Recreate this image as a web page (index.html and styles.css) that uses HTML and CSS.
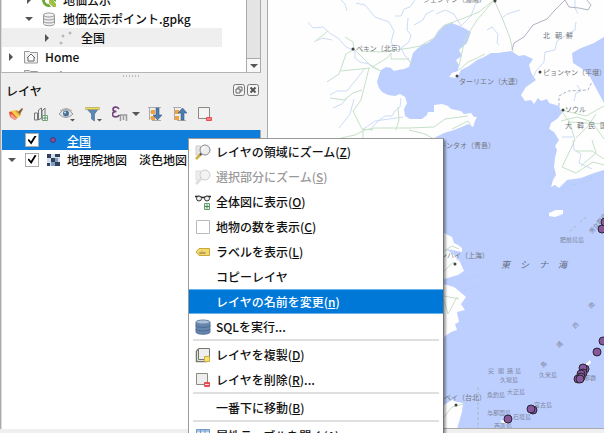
FILE: index.html
```html
<!DOCTYPE html>
<html lang="ja">
<head>
<meta charset="utf-8">
<title>レイヤ</title>
<link rel="stylesheet" href="styles.css">
</head>
<body>
<div class="workspace">
  <aside class="dock">
    <section class="browser">
      <ul class="tree">
        <li class="row depth-2"><span class="twist closed"></span>
          <svg class="icon" viewBox="0 0 16 16"><path d="M8 1a7 7 0 1 0 2 13.700L8 12A4 4 0 1 1 12 8l2.700 2A7 7 0 0 0 8 1z" fill="#70a83b"/><path d="M8 8h4l3 4v3h-3L8 11z" fill="#8cc04b"/><path d="M8 8l7 7" stroke="#e9b22c"/></svg>
          地価公示</li>
        <li class="row depth-2"><span class="twist open"></span>
          <svg class="icon" viewBox="0 0 16 16"><path d="M2.500 4v8.500c0 3 11 3 11 0V4" fill="#eee" stroke="#999"/><ellipse cx="8" cy="4" rx="5.500" ry="2" fill="#f4f4f4" stroke="#999"/><path d="M2.500 7c0 2.600 11 2.600 11 0M2.500 10c0 2.600 11 2.600 11 0" fill="none" stroke="#999"/></svg>
          地価公示ポイント.gpkg</li>
        <li class="row depth-3 hover"><span class="twist closed"></span>
          <svg class="icon" viewBox="0 0 16 16"><g fill="#ddd" stroke="#aaa"><circle cx="4" cy="6" r="1"/><circle cx="11" cy="3" r="1"/><circle cx="2" cy="13" r="1"/></g></svg>
          全国</li>
        <li class="row depth-1"><span class="twist closed"></span>
          <svg class="icon" viewBox="0 0 16 16"><path d="M1.500 14V2.500h5l1 1h7V14z" fill="#f1f1f1" stroke="#999"/><path d="M4 9l4-4 4 4M5 8.500V12h6V8.500" fill="#fff" stroke="#666"/></svg>
          Home</li>
        <li class="row depth-1"><span class="twist closed"></span>
          <svg class="icon" viewBox="0 0 16 16"><path d="M1.500 14V2.500h5l1 1h7V14z" fill="#e4e4e4" stroke="#999"/></svg>
          G:/</li>
      </ul>
      <div class="scroll"><span class="scroll-down"><i class="caret"></i></span></div>
    </section>
    <div class="grip"></div>
    <header class="title">
      <h2>レイヤ</h2>
      <button class="mini" aria-label="切り離す"><svg viewBox="0 0 12 12"><rect x=".5" y=".5" width="11" height="11" rx="2" fill="#f4f4f4" stroke="#777"/><path d="M5 5V3h4v4H7M3 5h4v4H3z" fill="none" stroke="#666"/></svg></button>
      <button class="mini" aria-label="閉じる"><svg viewBox="0 0 12 12"><rect x=".5" y=".5" width="11" height="11" rx="2" fill="#f4f4f4" stroke="#777"/><path d="M3.500 3.500l5 5m0-5l-5 5" stroke="#555" stroke-width="2"/></svg></button>
    </header>
    <div class="toolbar">
      <button class="tool" aria-label="スタイル"><svg viewBox="0 0 16 16"><path d="M1 6l4-1 5 6-3 3-5-3z" fill="#e8533c"/><path d="M3 5l4-1 5 6-3 2z" fill="#f6cf45"/><path d="M2 10l4 4 3-1-5-5z" fill="#f3a18f"/><path d="M7 5l2-1 4 4-1 2z" fill="#d39a45"/><path d="M10 6l4-4 1 1-3 5z" fill="#8b5a2b"/></svg></button>
      <button class="tool" aria-label="グループ追加"><svg viewBox="0 0 16 16"><path d="M1.500 7h3v7h-3zM5.500 4l3-2v10l-3 2zM9 5l3-3v10l-3 2z" fill="#eee" stroke="#777"/><path d="M9.500 9.500h5v5h-5z" fill="#fff" stroke="#6da57b"/><path d="M12 10v4m-2-2h4" stroke="#548d65"/></svg></button>
      <button class="tool wide" aria-label="地図テーマ"><svg viewBox="0 0 18 16"><path d="M1 8q7-9 14 0-7 7-14 0z" fill="#e5e5e5" stroke="#999"/><circle cx="8" cy="7.500" r="3" fill="#477399"/><circle cx="7" cy="6.500" r="1" fill="#cde"/><path d="M2 5q6-5 12 0" fill="none" stroke="#aaa"/><path d="M12 13h5l-2.500 2.500z" fill="#555"/></svg></button>
      <button class="tool wide" aria-label="フィルタ"><svg viewBox="0 0 18 16"><path d="M1 2h13l-4.500 6v7l-3-2V8z" fill="#5b87b4" stroke="#42698f" stroke-width=".6"/><path d="M.5 1.500h14v2H.5z" fill="#f2dc5b" stroke="#a99b46" stroke-width=".5"/><path d="M12 13h5l-2.500 2.500z" fill="#555"/></svg></button>
      <button class="tool" aria-label="式フィルタ"><svg viewBox="0 0 16 16"><path d="M7 3C5 0 1 1 1 3.500 1 5 3 5.500 4.500 5.500 2 5.500 0 7 .5 9c.5 2.500 5 2.500 7 0" fill="none" stroke="#73457e" stroke-width="1.700"/><path d="M8.500 15V9h6v6M11.500 14V10" fill="none" stroke="#999" stroke-width="1.500"/></svg></button>
      <button class="tool thin" aria-label="式フィルタのメニュー"><i class="caret"></i></button>
      <button class="tool" aria-label="全て展開"><svg viewBox="0 0 16 16"><path d="M1 1.500h13M2.500 2v12M2 6h3m-3 6h3M5 14.500h9" fill="none" stroke="#aaa"/><path d="M4 4h4v4H4zM4 10h4v4H4z" fill="#f0a33a"/><path d="M9 2h3v7h3l-4.500 5L6 9h3z" fill="#4e7cab" stroke="#365f8b" stroke-width=".6"/></svg></button>
      <button class="tool" aria-label="全て折りたたむ"><svg viewBox="0 0 16 16"><path d="M1 1.500h8M2.500 2v12M2 6h3m-3 6h3M5 14.500h9" fill="none" stroke="#aaa"/><path d="M3 4h4v4H3zM3 10h4v4H3z" fill="#f0a33a"/><path d="M9 14h3V7h3l-4.500-5L6 7h3z" fill="#4e7cab" stroke="#365f8b" stroke-width=".6"/></svg></button>
      <button class="tool" aria-label="レイヤを削除"><svg viewBox="0 0 16 16"><path d="M1.500 1.500h11v11h-11z" fill="#f4f4f4" stroke="#8a8a80"/><rect x="9" y="11" width="6" height="4" rx="1" fill="#e94b50"/><path d="M10 13h4" stroke="#fbb"/></svg></button>
    </div>
    <ul class="layers">
      <li class="layer selected"><span class="twist"></span>
        <input type="checkbox" id="layer-points" checked>
        <svg class="symbol" viewBox="0 0 16 16"><circle cx="7" cy="8" r="2.500" fill="#825096" stroke="#4b3775"/></svg>
        <label for="layer-points">全国</label></li>
      <li class="layer"><span class="twist open"></span>
        <input type="checkbox" id="layer-base" checked>
        <svg class="symbol" viewBox="0 0 16 16"><path d="M1 2h13v12H1z" fill="#d4dfeb"/><path d="M1 2h4v4H1zM9 2h5v3H9zM5 6h4v4H5zM9 10h5v4H9zM1 11h3v3H1z" fill="#2e4160"/><path d="M5 10h4v4H5zM9 6h3v4H9z" fill="#829ebb"/></svg>
        <label for="layer-base">地理院地図　淡色地図</label></li>
    </ul>
  </aside>
  <main class="canvas">
    <svg class="map" viewBox="268 0 336 429" preserveAspectRatio="xMinYMin slice">
      <path class="sea" d="M434 38L428 43 422 45 417 49 413 53 411 60 409 67 404 69 398 70 394 71 391 68 386 67 381 70 379 75 377 82 379 88 382 92 388 95 395 96 400 94 405 97 407 103 404 109 405 116 410 119 422 119 427 115 428 112 434 112 434 105 442 104 448 106 451 109 461 111 464 114 471 113 474 117 477 117 475 121 473 127 468 124 464 126 454 130 444 133 430 140 420 180 438 230 444 233 452 237 454 243 458 245 462 248 462 252 447 249 451 253 457 257 460 262 464 271 458 275 451 277 444 279 440 283 447 285 454 287 459 291 466 297 461 304 465 310 457 312 459 322 455 324 457 330 451 332 444 337 430 370 430 429 604 429 604 170 594 173 581 178 574 179 567 180 559 188 555 185 551 187 553 180 556 175 554 167 555 158 557 150 555 146 559 140 554 132 549 129 551 123 557 119 562 113 559 106 549 103 547 99 541 101 538 98 534 104 531 100 525 101 521 95 526 87 536 80 533 76 531 72 529 65 533 59 524 55 519 56 511 51 504 52 498 53 491 53 484 57 477 60 469 66 461 70 457 78 449 77 452 73 458 71 459 65 456 60 462 56 459 50 467 43 471 32 462 27 452 23 444 25 438 31z"/>
      <path class="sea" d="M604 37l-10 6-5 2-8 3-9 5 1 10 8 5 8 7 8 15 7 13z"/>
      <path class="land" d="M430 410l14-5 8-5 5 2 6 1-1 9-3 10-2 7H430zM549 213l7-3 7 0 0 4-8 3-6-1zM586 367l5-4-1-3-4 4zM500 420l5 1 2 3-5-1z"/>
      <g class="specks"><path d="M554 172l-4 5 1 7-5-2M561 190l9-5 12-2 10-6M572 184l5 2M551 108l7 5-7 2M547 127l6 7M468 280l8-5 3 4 4-1M464 290l12-3M468 303l-3 8M529 182l3 2M488 62l5-2M497 58l2 3M477 131l-4 3"/></g>
      <g class="river">
        <path d="M308 22l5 6 10-1 8 7 7 4 8 9 9 4 0 7 5 4 9 2 10 6M317 41l5-3 10 2M341 0l4 4 2 7M356 3l9 2 10 12 14 5 5 9-3 11 4 6M395 16h6l3-7 6-2 5-7M408 18l-1 12 4 5-2 7-8 6 4 8 4 3M434 10l-8 4-3 6-9 5M330 95l7-4h10l12-15 6-8M333 108l9-4 5-6M339 128l11-14 4-15M370 130l8-9 7-5h7l3-5 5-4 1-9M362 130l13-9 28-4M436 14l9-4 9 4 7 12 10-10 4-11 9-8M487 30l5-3 6 7-1 9 2 2M544 62l1-10 10-2 2-9 8-5 10-6 1-8M532 80l4-9 8-9M574 101l2-8 5-2-4-6M575 0v8l3 6M573 140l1 10 7 4-2 9 13 6M562 137l11 0M446 250l7 2 5 9M502 18l5-4 13-4"/>
      </g>
      <g class="road">
        <path d="M314 42l14-11M345 37l8 5 1 7 18 18 9 4M353 50l-7 4-7 20-12 8M341 71l29-3M361 51l19 1 30-4 10-2 14-8M372 67l15-9 4-5v6h17l3 5M369 68l-5 20-3 12-8 11 9 18 11 1M330 98l14 2 9-7 9-3M341 138l14-3 10-5 9-2h35l25-1M409 130l16 4 9 5M363 130v9M398 107l1 13-3 10"/>
        <path d="M434 38l11-13 14-5 20-8 15-12M494 0l-17 20-12 19-6 27M494 0l9 20 7 18 3 14M459 70l9-8 9-4 8-4M434 127l11-8 23-3M452 129l16-8 3 5M561 110l9 13 5 17M562 110l24 6 18-10M561 121l16-4 15 5 12 17M576 138l12-12 8-12M575 140l-13 27 14 6 17-11 11 3M581 166l15-13-4-13M576 151l16 0 12 8M569 122l35 2M444 251l8-5 7 3M440 276l8-9 6-5M444 300l4 14 9-17M444 417l8-10 11-3M444 296l15 3"/>
      </g>
      <g class="border"><path d="M512 50l2-7 10-6 9-12 14-6 8-9 10-10 4 7 10 1 9 2 3-5-4-5"/><path stroke-dasharray="3 2" d="M559 106v-10l9-5 20-1 4-8M586 217l-6 5m-4 4l-7 6M478 387v42"/></g>
      <g class="city"><circle cx="353" cy="49" r="1.500"/><circle cx="457" cy="76" r="1.500"/><circle cx="540" cy="72" r="1.500"/><circle cx="563" cy="110" r="1.500"/><circle cx="495" cy="1" r="1.500"/><circle cx="455" cy="264" r="1.500"/><circle cx="456" cy="405" r="1.500"/></g>
      <g class="names">
        <text x="356" y="51">ペキン（北京）</text>
        <text x="423" y="2">シェンヤン（瀋陽）</text>
        <text x="459" y="84">ターリエン（大連）</text>
        <text x="543" y="75">ピョンヤン（平壌）</text>
        <text x="565" y="112">ソウル</text>
        <text x="495" y="148" text-anchor="end">チンタオ（青島）</text>
        <text x="489" y="258" text-anchor="end">シャンハイ（上海）</text>
        <text x="486" y="400" text-anchor="end">タイペイ（台北）</text>
        <text x="543 555 566" y="38">北朝鮮</text>
        <text x="565 577 588 600" y="128">大韓民国</text>
        <text class="ocean" x="501 520 539 558" y="268">東シナ海</text>
      </g>
      <g class="islands">
        <text x="560" y="242">肥前鳥島</text>
        <text x="488 498 507 515" y="373">尖閣諸島</text>
        <text x="500" y="382">久場島</text><text x="539" y="377">久米島</text>
        <text x="507" y="394">大正島</text><text x="487" y="397">魚釣島</text>
        <text x="534" y="407">宮古島</text><text x="487" y="415">与那国島</text>
        <text x="513" y="419">石垣島</text><text x="494" y="428">西表島</text>
        <text x="584" y="380">那覇</text>
        <text transform="translate(592 234) rotate(-50)">男女群島</text>
        <text transform="translate(591 309) rotate(-45)">南</text>
        <text transform="translate(575 329) rotate(-45)">西</text>
        <text transform="translate(559 348) rotate(-45)">諸</text>
        <text transform="translate(543 368) rotate(-45)">島</text>
      </g>
      <g class="points"><circle cx="605" cy="222" r="4"/><circle cx="602" cy="229" r="4"/><circle cx="603" cy="341" r="4"/><circle cx="597" cy="352" r="4"/><circle cx="585" cy="369" r="4"/><circle cx="583" cy="368" r="4"/><circle cx="583" cy="373" r="4"/><circle cx="581" cy="374" r="4"/><circle cx="581" cy="377" r="4"/><circle cx="578" cy="379" r="4"/><circle cx="580" cy="379" r="4"/><circle cx="533" cy="410" r="4"/><circle cx="531" cy="409" r="4"/><circle cx="508" cy="419" r="4"/></g>
    </svg>
  </main>
</div>
<footer class="status"></footer>

<div class="menu" role="menu">
  <button class="item" role="menuitem"><svg class="glyph" viewBox="0 0 16 16"><path d="M1 2h5v9H1z" fill="#e6e6e2" stroke="#ccc"/><path d="M6 10l-5 5" stroke="#d1ad43" stroke-width="2.500"/><path d="M7 9l-2 2" stroke="#555" stroke-width="2"/><circle cx="10" cy="6" r="5" fill="#eee" stroke="#8a8a8a"/><path d="M7 6q0-3 3-3" fill="none" stroke="#fff"/></svg><span>レイヤの領域にズーム(<u>Z</u>)</span></button>
  <button class="item" role="menuitem" disabled><svg class="glyph" viewBox="0 0 16 16"><path d="M1 2h5v9H1z" fill="#eee" stroke="#ddd"/><path d="M6 10l-5 5" stroke="#ddd" stroke-width="2.500"/><circle cx="10" cy="6" r="5" fill="#f3f3f3" stroke="#ccc"/></svg><span>選択部分にズーム(<u>S</u>)</span></button>
  <button class="item" role="menuitem"><svg class="glyph" viewBox="0 0 16 16"><path d="M0 2.500h4l3 1h2l3-1h4" fill="none" stroke="#222" stroke-width="1.500"/><circle cx="4" cy="4.500" r="2.500" fill="#eee" stroke="#333"/><circle cx="12" cy="4.500" r="2.500" fill="#eee" stroke="#333"/><path d="M9.500 9.500h5v6h-5z" fill="#e7f1e8" stroke="#629b69"/><path d="M12 10.500v4m-2-2h4" stroke="#4d8955"/></svg><span>全体図に表示(<u>O</u>)</span></button>
  <button class="item" role="menuitem"><svg class="glyph" viewBox="0 0 16 16"><path d="M1.500 1.500h13v13h-13z" fill="#fff" stroke="#bbb"/></svg><span>地物の数を表示(<u>C</u>)</span></button>
  <button class="item" role="menuitem"><svg class="glyph" viewBox="0 0 16 16"><path d="M1 8l3-3.500h10.500v7H4z" fill="#f3d96b" stroke="#c8a93d"/><text class="abc" x="4" y="10">abc</text></svg><span>ラベルを表示(<u>L</u>)</span></button>
  <button class="item" role="menuitem"><span class="glyph"></span><span>コピーレイヤ</span></button>
  <button class="item active" role="menuitem"><span class="glyph"></span><span>レイヤの名前を変更(<u>n</u>)</span></button>
  <button class="item" role="menuitem"><svg class="glyph" viewBox="0 0 16 16"><path d="M1 3v10c0 3 14 3 14 0V3" fill="#6685ad" stroke="#58749a"/><ellipse cx="8" cy="3" rx="7" ry="2" fill="#adc0d8" stroke="#6985aa"/><path d="M1 6.500c0 2.500 14 2.500 14 0M1 10c0 2.500 14 2.500 14 0" fill="none" stroke="#4b6b94"/></svg><span>SQLを実行...</span></button>
  <hr>
  <button class="item" role="menuitem"><svg class="glyph" viewBox="0 0 16 16"><path d="M1.500 4v10.500H12M1.500 4l2-2" fill="none" stroke="#77776e" stroke-width="1.500"/><path d="M3.500 1.500h11v11h-11z" fill="#eee" stroke="#77776e"/><path d="M9.500 9.500h5v5h-5z" fill="#f7e17a" stroke="#d0ae35"/></svg><span>レイヤを複製(<u>D</u>)</span></button>
  <button class="item" role="menuitem"><svg class="glyph" viewBox="0 0 16 16"><path d="M1.500 1.500h11v11h-11z" fill="#eee" stroke="#8a8a80"/><rect x="9" y="10" width="6" height="5" rx="1" fill="#e94b50"/><path d="M10 12.500h4" stroke="#fdd"/></svg><span>レイヤを削除(<u>R</u>)...</span></button>
  <hr>
  <button class="item" role="menuitem"><span class="glyph"></span><span>一番下に移動(<u>B</u>)</span></button>
  <hr>
  <button class="item" role="menuitem"><svg class="glyph" viewBox="0 0 16 16"><path d="M1.500 1.500h13v13h-13z" fill="#e4eef8" stroke="#6f9bc8"/><path d="M2 3h12M5.500 2v12M2 6.500h12M2 10.500h12M10 2v12" stroke="#6f9bc8"/></svg><span>属性テーブルを開く(<u>A</u>)</span></button>
</div>
</body>
</html>
```

FILE: styles.css
```css
* { box-sizing: border-box; }

body {
  margin: 0;
  height: 100vh;
  overflow: hidden;
  display: flex;
  flex-direction: column;
  position: relative;
  background: #efefef;
  color: #111;
  font: 500 12px/19px "Noto Sans CJK JP", "Noto Sans", sans-serif;
}

ul, h2 { margin: 0; padding: 0; list-style: none; font: inherit; }

button {
  padding: 0;
  border: 0;
  background: none;
  color: inherit;
  font: inherit;
}

svg { display: block; flex: none; }

.workspace { flex: 1; min-height: 0; display: flex; gap: 6px; }

.dock {
  width: 261px;
  flex: none;
  display: flex;
  flex-direction: column;
  border-left: 1px solid #aaa;
}

.browser {
  height: 73px;
  display: flex;
  overflow: hidden;
  background: #fff;
  border-left: 1px solid #ddd;
  border-right: 1px solid #aaa;
  border-bottom: 1px solid #b4b4b4;
}

.tree { flex: 1; margin-top: -10px; margin-right: 24px; }

.row { display: flex; align-items: center; height: 19px; white-space: nowrap; }
.row.hover { background: #efefef; }
.depth-1 { padding-left: 1px; }
.depth-2 { padding-left: 19px; }
.depth-3 { padding-left: 37px; }

.icon { width: 16px; height: 16px; margin: 0 6px 0 5px; }

.twist { width: 15px; flex: none; display: flex; justify-content: center; }
.twist.closed::before {
  content: "";
  border: 4px solid transparent;
  border-left: 4px solid #555;
  border-right: 0;
}
.twist.open::before,
.caret {
  content: "";
  border: 4px solid transparent;
  border-top: 4px solid #555;
  border-bottom: 0;
}

.scroll {
  width: 14px;
  flex: none;
  display: flex;
  align-items: flex-end;
  background: #e4e4e4;
  border-left: 1px solid #aaa;
}
.scroll-down {
  width: 100%;
  height: 14px;
  display: flex;
  align-items: center;
  justify-content: center;
  background: #f8f8f8;
  border-top: 1px solid #aaa;
}

.grip {
  width: 17px;
  height: 2px;
  margin: 2px auto;
  background: repeating-linear-gradient(90deg, #bbb 0 1px, transparent 1px 3px);
}

.title { display: flex; align-items: center; gap: 2px; height: 22px; padding: 0 2px 0 5px; }
.title h2 { flex: 1; }
.mini, .mini svg { width: 12px; height: 12px; }

.toolbar { display: flex; align-items: center; gap: 9px; height: 26px; padding-left: 7px; }
.tool, .tool svg { width: 16px; height: 16px; }
.tool.wide, .tool.wide svg { width: 18px; }
.tool.thin { width: 8px; display: flex; align-items: center; margin: 0 -2px 0 -5px; }

.layers {
  flex: 1;
  background: #fff;
  border-left: 1px solid #ddd;
  border-right: 1px solid #aaa;
  margin-top: 3px;
}
.layer { display: flex; align-items: center; height: 19px; padding-left: 2px; white-space: nowrap; }
.layer.selected { height: 20px; background: #0f7edb; color: #fff; }
.layer.selected label { text-decoration: underline; }
.symbol { width: 16px; height: 16px; margin: 0 5px 0 7px; }

input[type="checkbox"] {
  appearance: none;
  flex: none;
  width: 14px;
  height: 14px;
  margin: 0 0 0 6px;
  background: #fff;
  border: 1px solid #aaa;
  display: grid;
  place-items: center;
}
input[type="checkbox"]:checked::before {
  content: "";
  width: 9px;
  height: 9px;
  background: #000;
  clip-path: polygon(0 50%, 16% 40%, 38% 68%, 80% 0, 100% 6%, 42% 100%);
}

.canvas { flex: 1; min-width: 0; overflow: hidden; background: #fefefe; border-left: 1px solid #aaa; border-bottom: 1px solid #aaa; }
.map { width: 100%; height: 100%; }
.sea { fill: #bdcffe; }
.land { fill: #fefefe; }
.specks, .river, .road, .border { fill: none; stroke-linejoin: round; }
.specks { stroke: #a9c9f5; stroke-dasharray: 1 2; }
.river { stroke: #cddcf6; }
.road { stroke: #c6e0c8; }
.border { stroke: #adb4c4; }
.city { fill: #444; }
.names { fill: #74787f; font-size: 7px; font-weight: 400; }
.ocean { font-size: 9px; font-style: italic; fill: #667085; }
.islands { fill: #7d87a3; font-size: 6px; font-weight: 400; }
.points { fill: #87579b; stroke: #292431; stroke-width: 1; }

.status { height: 4px; flex: none; background: #efefef; }

.menu {
  position: absolute;
  left: 188px;
  top: 138px;
  width: 256px;
  background: #fff;
  border: 1px solid #999;
  border-right-color: #777;
  box-shadow: 2px 2px 2px rgba(0, 0, 0, 0.35);
}
.item {
  display: flex;
  align-items: center;
  gap: 5px;
  width: 100%;
  height: 25px;
  padding-left: 6px;
  white-space: nowrap;
  text-align: left;
}
.item:disabled { color: #999; }
.item.active {
  background: #0078d7;
  color: #fff;
  border-top: 1px solid #66b5f1;
  border-bottom: 1px solid #66b5f1;
}
.item u { text-underline-offset: 1px; }
.glyph { width: 16px; height: 16px; flex: none; }
.abc { font: 5px "Liberation Serif", serif; fill: #654; }
.menu hr { height: 2px; margin: 0 4px 1px; border: 0; background: #e0e0e0; }
```
